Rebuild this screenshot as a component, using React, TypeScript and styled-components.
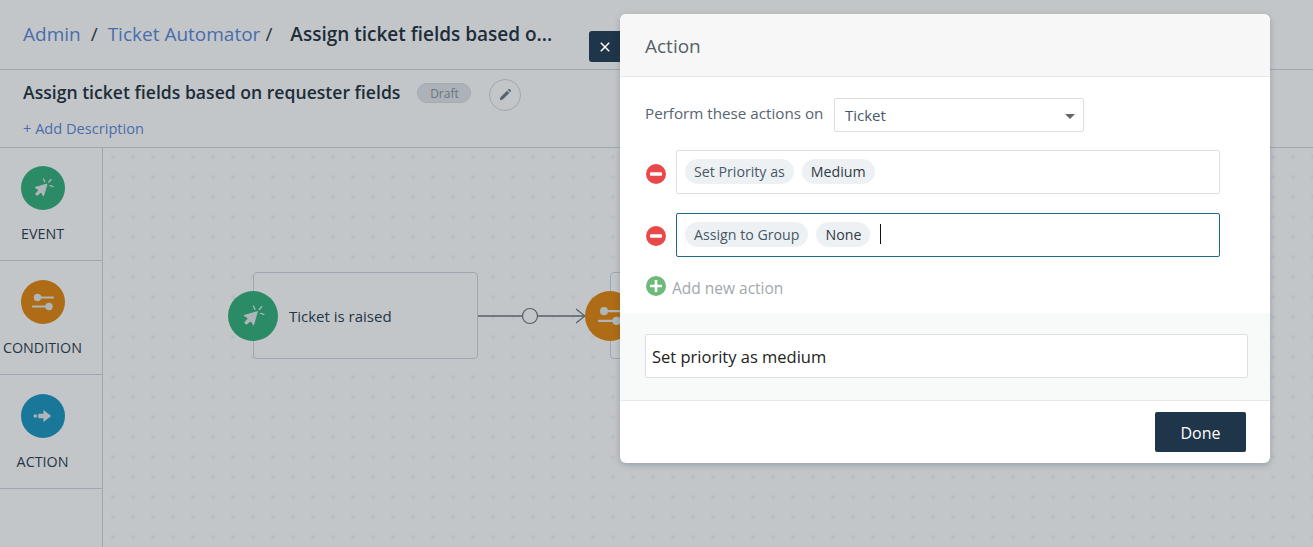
import React from "react";
import styled, { createGlobalStyle } from "styled-components";

const Global = createGlobalStyle`
  html, body { margin: 0; padding: 0; height: 100%; overflow: hidden; background: #fff; }
  * { box-sizing: border-box; }
  body { font-family: "Open Sans", "Liberation Sans", sans-serif; color: #12344d; }
`;

const Page = styled.div`
  position: relative;
  width: 1313px;
  height: 547px;
  display: flex;
  flex-direction: column;
  overflow: hidden;
  background: #fff;
`;
const TopBar = styled.header`
  height: 70px;
  flex: none;
  display: flex;
  align-items: center;
  padding: 0 23px 2px;
  border-bottom: 1px solid #cfd7df;
  font-size: 19px;
  white-space: nowrap;
`;
const Crumb = styled.span`
  color: #5b89d8;
`;
const Slash = styled.span<{ $ml: number; $mr: number }>`
  color: #2a3f50;
  margin: 0 ${(p) => p.$mr}px 0 ${(p) => p.$ml}px;
`;
const CrumbTitle = styled.span`
  font-size: 19px;
  font-weight: 600;
  color: #24333f;
`;
const SubBar = styled.section`
  height: 78px;
  flex: none;
  padding: 8px 23px 0;
  border-bottom: 1px solid #cfd7df;
`;
const TitleRow = styled.div`
  display: flex;
  align-items: center;
  height: 30px;
`;
const PageTitle = styled.h1`
  margin: 0 0 3px;
  font-size: 17.6px;
  font-weight: 600;
  color: #24333f;
  white-space: nowrap;
`;
const DraftPill = styled.span`
  margin-left: 17px;
  width: 54px;
  height: 20px;
  border-radius: 10px;
  background: #e0e4e8;
  border: 1px solid #d5dbe0;
  color: #8a949d;
  font-size: 12px;
  display: flex;
  align-items: center;
  justify-content: center;
`;
const PencilButton = styled.button`
  margin-left: 18px;
  margin-top: 3px;
  width: 32px;
  height: 32px;
  padding: 0;
  border-radius: 50%;
  border: 1px solid #cfd7df;
  background: #fff;
  display: flex;
  align-items: center;
  justify-content: center;
`;
const AddDescription = styled.a`
  display: block;
  margin-top: 10px;
  font-size: 14.6px;
  color: #5b89d8;
`;
const Main = styled.main`
  flex: 1;
  display: flex;
  min-height: 0;
`;
const Sidebar = styled.aside`
  width: 103px;
  flex: none;
  border-right: 1px solid #cfd7df;
  display: flex;
  flex-direction: column;
`;
const Tool = styled.div`
  height: 114px;
  flex: none;
  padding: 19px 17px 0 0;
  border-bottom: 1px solid #cfd7df;
  display: flex;
  flex-direction: column;
  align-items: center;
  font-size: 14.3px;
  color: #2a3f50;
  &:first-child { height: 113px; padding-top: 18px; }
`;
const ToolLabel = styled.span`
  margin-top: 14px;
  line-height: 20px;
`;
const Disc = styled.span<{ $c: string; $s: number }>`
  width: ${(p) => p.$s}px;
  height: ${(p) => p.$s}px;
  border-radius: 50%;
  background: ${(p) => p.$c};
  display: flex;
  align-items: center;
  justify-content: center;
  flex: none;
`;
const Canvas = styled.div`
  position: relative;
  flex: 1;
  background-color: #fff;
  background-image: radial-gradient(circle, #eef0f2 0, transparent 3px);
  background-size: 20px 20px;
  background-position: 0 -1px;
`;
const Node = styled.div<{ $x: number }>`
  position: absolute;
  left: ${(p) => p.$x}px;
  top: 124px;
  width: 225px;
  height: 87px;
  background: #fff;
  border: 1px solid #cfd7df;
  border-radius: 4px;
  display: flex;
  align-items: center;
  padding-left: 35px;
  font-size: 15px;
  color: #2a3f50;
`;
const NodeDisc = styled.div`
  position: absolute;
  left: -26px;
  top: 18px;
`;
const Connector = styled.svg`
  position: absolute;
  left: 375px;
  top: 156px;
`;
const Overlay = styled.div`
  position: absolute;
  inset: 0;
  background: rgba(15, 27, 39, 0.25);
`;
const CloseButton = styled.button`
  position: absolute;
  left: 589px;
  top: 31px;
  width: 31px;
  height: 31px;
  padding: 0;
  border: 0;
  border-radius: 3px 0 0 3px;
  background: #1f3549;
  display: flex;
  align-items: center;
  justify-content: center;
`;
const Modal = styled.div`
  position: absolute;
  left: 620px;
  top: 14px;
  width: 650px;
  height: 449px;
  background: #fff;
  border-radius: 6px;
  box-shadow: 0 2px 6px rgba(18, 52, 77, 0.25);
  display: flex;
  flex-direction: column;
  overflow: hidden;
`;
const ModalHeader = styled.div`
  height: 63px;
  flex: none;
  padding: 2px 25px 0;
  display: flex;
  align-items: center;
  background: #f7f7f7;
  border-bottom: 1px solid #e6e9ec;
  font-size: 19px;
  color: #585f65;
`;
const ModalBody = styled.div`
  flex: none;
  height: 236px;
  padding: 21px 25px 0;
`;
const PerformRow = styled.div`
  display: flex;
  align-items: center;
  height: 34px;
`;
const PerformLabel = styled.span`
  font-size: 15.2px;
  color: #56646f;
  width: 189px;
  margin-top: -4px;
`;
const FakeSelect = styled.div`
  position: relative;
  width: 250px;
  height: 34px;
  border: 1px solid #dcdfe2;
  border-radius: 2px;
  padding-left: 10px;
  display: flex;
  align-items: center;
  font-size: 15px;
  color: #475867;
  &::after {
    content: "";
    position: absolute;
    right: 8px;
    top: 15px;
    border-top: 5px solid #666;
    border-left: 5px solid transparent;
    border-right: 5px solid transparent;
  }
`;
const ActionRow = styled.div<{ $mt: number }>`
  display: flex;
  align-items: center;
  margin-top: ${(p) => p.$mt}px;
`;
const RowIcon = styled.svg<{ $dy: number }>`
  width: 20px;
  height: 20px;
  margin: ${(p) => p.$dy}px 0 0 1px;
  flex: none;
`;
const ActionBox = styled.div<{ $focus?: boolean }>`
  margin-left: 10px;
  width: 544px;
  height: 44px;
  border: 1px solid ${(p) => (p.$focus ? "#1c6a8c" : "#dde1e5")};
  border-radius: 2px;
  padding: 0 8px 2px;
  display: flex;
  align-items: center;
  gap: 8px;
`;
const Chip = styled.span`
  height: 25px;
  border-radius: 13px;
  background: #eef1f4;
  padding: 0 9px;
  display: flex;
  align-items: center;
  font-size: 14.2px;
  color: #475867;
  white-space: nowrap;
`;
const ValueChip = styled(Chip)`
  color: #2f3b45;
`;
const Caret = styled.span`
  width: 1px;
  height: 20px;
  background: #111;
  margin-left: 2px;
`;
const AddRow = styled.div`
  display: flex;
  align-items: center;
  margin-top: 18px;
  height: 22px;
  font-size: 15.5px;
  color: #a2a7ab;
`;
const AddLabel = styled.span`
  margin-top: 3px;
`;
const AddIcon = styled.svg`
  width: 20px;
  height: 20px;
  margin: 0 6px 0 1px;
  flex: none;
`;
const NameSection = styled.div`
  flex: none;
  height: 88px;
  padding: 21px 22px 0 25px;
  background: #f8f9f9;
  border-bottom: 1px solid #e6e9ec;
`;
const NameInput = styled.div`
  height: 44px;
  background: #fff;
  border: 1px solid #dde1e5;
  border-radius: 2px;
  padding-left: 6px;
  display: flex;
  align-items: center;
  font-size: 16.5px;
  color: #222;
`;
const ModalFooter = styled.div`
  flex: 1;
  display: flex;
  justify-content: flex-end;
  padding: 11px 24px 0 0;
`;
const DoneButton = styled.button`
  width: 91px;
  height: 40px;
  padding: 2px 0 0;
  border: 0;
  border-radius: 2px;
  background: #1f3549;
  color: #fff;
  font: 16px "Open Sans", "Liberation Sans", sans-serif;
`;

const ClickIcon = ({ s }: { s: number }) => (
  <svg width={s} height={s} viewBox="0 0 24 24" fill="none">
    <path d="M16 8 4 11.5 8 14 4.5 18 6 19.5 10 16 12.5 20Z" fill="#e4e8ea" stroke="#e4e8ea" strokeWidth="1" strokeLinejoin="round" />
    <path d="M12.5 3 13.8 5.8M20 3.5 17.8 6M22 10.5 19 9.6" stroke="#e4e8ea" strokeWidth="1.3" strokeLinecap="round" />
  </svg>
);
const SlidersIcon = ({ s }: { s: number }) => (
  <svg width={s} height={s} viewBox="0 0 24 24" fill="none">
    <circle cx="6.5" cy="7.5" r="3.7" fill="#e4e8ea" />
    <path d="M8 7.5H22" stroke="#e4e8ea" strokeWidth="2.2" strokeLinecap="round" />
    <path d="M2 16.5H16" stroke="#e4e8ea" strokeWidth="2.2" strokeLinecap="round" />
    <circle cx="18" cy="16.5" r="3.7" fill="#e4e8ea" />
  </svg>
);
const ArrowIcon = ({ s }: { s: number }) => (
  <svg width={s} height={s} viewBox="0 0 24 24" fill="none">
    <circle cx="3.5" cy="12" r="1.9" fill="#e4e8ea" />
    <path d="M7.5 9.5H12.5V5.5L21 12 12.5 18.5V14.5H7.5L6.2 12Z" fill="#e4e8ea" />
  </svg>
);

export default function App() {
  return (
    <Page>
      <Global />
      <TopBar>
        <Crumb>Admin</Crumb>
        <Slash $ml={10} $mr={10}>/</Slash>
        <Crumb>Ticket Automator</Crumb>
        <Slash $ml={5} $mr={18}>/</Slash>
        <CrumbTitle>Assign ticket fields based o...</CrumbTitle>
      </TopBar>
      <SubBar>
        <TitleRow>
          <PageTitle>Assign ticket fields based on requester fields</PageTitle>
          <DraftPill>Draft</DraftPill>
          <PencilButton aria-label="Edit">
            <svg width="14" height="14" viewBox="0 0 16 16">
              <path d="M2 14 2.8 10.6 10.4 3 13 5.6 5.4 13.2ZM11.2 2.2 12 1.4C12.4 1 13 1 13.4 1.4L14.6 2.6C15 3 15 3.6 14.6 4L13.8 4.8Z" fill="#6f7c87" />
            </svg>
          </PencilButton>
        </TitleRow>
        <AddDescription>+ Add Description</AddDescription>
      </SubBar>
      <Main>
        <Sidebar>
          <Tool>
            <Disc $c="#35b07c" $s={44}><ClickIcon s={24} /></Disc>
            <ToolLabel>EVENT</ToolLabel>
          </Tool>
          <Tool>
            <Disc $c="#e38710" $s={44}><SlidersIcon s={24} /></Disc>
            <ToolLabel>CONDITION</ToolLabel>
          </Tool>
          <Tool>
            <Disc $c="#1d97c0" $s={44}><ArrowIcon s={22} /></Disc>
            <ToolLabel>ACTION</ToolLabel>
          </Tool>
        </Sidebar>
        <Canvas>
          <Node $x={150}>
            <NodeDisc><Disc $c="#35b07c" $s={50}><ClickIcon s={26} /></Disc></NodeDisc>
            Ticket is raised
          </Node>
          <Connector width="110" height="24" viewBox="0 0 110 24" fill="none">
            <path d="M0 12H44M60 12H106" stroke="#6d7780" strokeWidth="1.4" />
            <circle cx="52" cy="12" r="7.5" stroke="#6d7780" strokeWidth="1.2" fill="#fff" />
            <path d="M98 5 107 12 98 19" stroke="#6d7780" strokeWidth="1.2" />
          </Connector>
          <Node $x={507}>
            <NodeDisc><Disc $c="#e38710" $s={50}><SlidersIcon s={26} /></Disc></NodeDisc>
          </Node>
        </Canvas>
      </Main>
      <Overlay />
      <CloseButton aria-label="Close">
        <svg width="10" height="10" viewBox="0 0 10 10">
          <path d="M.8.8 9.2 9.2M9.2.8.8 9.2" stroke="#fff" strokeWidth="1.5" />
        </svg>
      </CloseButton>
      <Modal>
        <ModalHeader>Action</ModalHeader>
        <ModalBody>
          <PerformRow>
            <PerformLabel>Perform these actions on</PerformLabel>
            <FakeSelect>Ticket</FakeSelect>
          </PerformRow>
          <ActionRow $mt={18}>
            <RowIcon $dy={4} viewBox="0 0 20 20">
              <circle cx="10" cy="10" r="10" fill="#e9484b" />
              <rect x="4" y="8.2" width="12" height="3.6" rx="1" fill="#fff" />
            </RowIcon>
            <ActionBox>
              <Chip>Set Priority as</Chip>
              <ValueChip>Medium</ValueChip>
            </ActionBox>
          </ActionRow>
          <ActionRow $mt={19}>
            <RowIcon $dy={2} viewBox="0 0 20 20">
              <circle cx="10" cy="10" r="10" fill="#e9484b" />
              <rect x="4" y="8.2" width="12" height="3.6" rx="1" fill="#fff" />
            </RowIcon>
            <ActionBox $focus>
              <Chip>Assign to Group</Chip>
              <ValueChip>None</ValueChip>
              <Caret />
            </ActionBox>
          </ActionRow>
          <AddRow>
            <AddIcon viewBox="0 0 20 20">
              <circle cx="10" cy="10" r="10" fill="#6dbb7a" />
              <path d="M10 4V16M4 10H16" stroke="#fff" strokeWidth="2.6" />
            </AddIcon>
            <AddLabel>Add new action</AddLabel>
          </AddRow>
        </ModalBody>
        <NameSection>
          <NameInput>Set priority as medium</NameInput>
        </NameSection>
        <ModalFooter>
          <DoneButton>Done</DoneButton>
        </ModalFooter>
      </Modal>
    </Page>
  );
}
